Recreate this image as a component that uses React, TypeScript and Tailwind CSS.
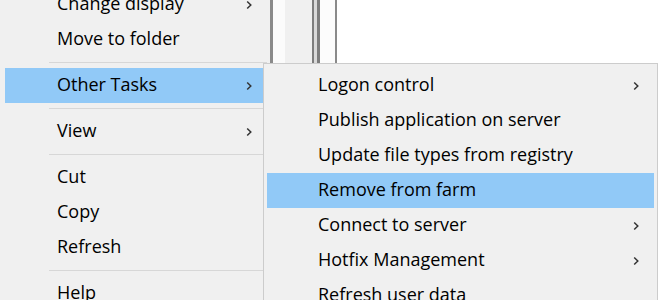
import React from "react";

const Chevron = () => (
  <svg width="6" height="10" viewBox="0 0 6 10" className="shrink-0">
    <path d="M1.2 1.5 L4.8 5 L1.2 8.5" stroke="#333333" strokeWidth="1.5" fill="none" />
  </svg>
);

type Item = { label: string; sub?: boolean; active?: boolean } | "sep";

const leftItems: Item[] = [
  { label: "Change display", sub: true },
  { label: "Move to folder" },
  "sep",
  { label: "Other Tasks", sub: true, active: true },
  "sep",
  { label: "View", sub: true },
  "sep",
  { label: "Cut" },
  { label: "Copy" },
  { label: "Refresh" },
  "sep",
  { label: "Help" },
];

const subItems: Item[] = [
  { label: "Logon control", sub: true },
  { label: "Publish application on server" },
  { label: "Update file types from registry" },
  { label: "Remove from farm", active: true },
  { label: "Connect to server", sub: true },
  { label: "Hotfix Management", sub: true },
  { label: "Refresh user data" },
];

function LeftMenu() {
  return (
    <div className="w-[270px] shrink-0 self-start bg-[#f0f0f0] mt-[-13px] pl-[5px] pr-[3px] flex flex-col">
      {leftItems.map((it, i) =>
        it === "sep" ? (
          <div key={i} className="h-[11px] flex items-center pl-[44px]">
            <div className="h-px w-full bg-[#d7d7d7]" />
          </div>
        ) : (
          <div
            key={i}
            className={
              "h-[35px] flex items-center justify-between pl-[52px] pr-[15px] " +
              (it.active ? "bg-[#91c9f7]" : "")
            }
          >
            <span className="pb-[3px]">{it.label}</span>
            {it.sub ? <Chevron /> : null}
          </div>
        )
      )}
    </div>
  );
}

function SubMenu() {
  return (
    <div className="absolute left-[263px] top-[63px] w-[395px] bg-[#f0f0f0] border border-[#cccccc] pt-[4px] px-[3px] flex flex-col">
      {subItems.map((it, i) =>
        it === "sep" ? null : (
          <div
            key={i}
            className={
              "h-[35px] flex items-center justify-between pl-[51px] pr-[15px] " +
              (it.active ? "bg-[#91c9f7]" : "")
            }
          >
            <span className="pb-[3px]">{it.label}</span>
            {it.sub ? <Chevron /> : null}
          </div>
        )
      )}
    </div>
  );
}

export default function App() {
  return (
    <div className="w-[660px] h-[300px] overflow-hidden relative bg-white flex font-['Open_Sans',sans-serif] text-[18px] leading-none text-black">
      <LeftMenu />
      <div className="w-[3px] shrink-0 bg-[#8a8a8a]" />
      <div className="w-[12px] shrink-0 bg-[#fbfbfb]" />
      <div className="w-[27px] shrink-0 bg-[#f0f0f0]" />
      <div className="w-[2px] shrink-0 bg-[#7d7d7d]" />
      <div className="w-[3px] shrink-0 bg-[#d9d9d9]" />
      <div className="w-[3px] shrink-0 bg-[#7d7d7d]" />
      <div className="w-[15px] shrink-0 bg-[#fcfcfc]" />
      <div className="w-[2px] shrink-0 bg-[#8a8a8a]" />
      <div className="flex-1 bg-white" />
      <SubMenu />
    </div>
  );
}
